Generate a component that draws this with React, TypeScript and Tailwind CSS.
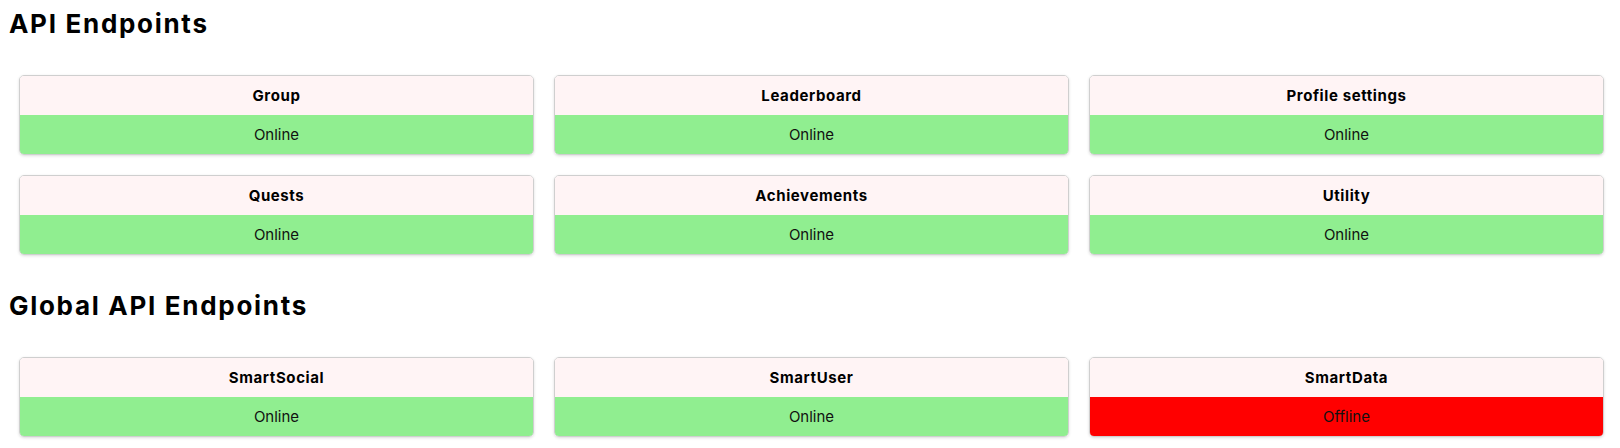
const apiEndpoints = [
  { name: "Group", online: true },
  { name: "Leaderboard", online: true },
  { name: "Profile settings", online: true },
  { name: "Quests", online: true },
  { name: "Achievements", online: true },
  { name: "Utility", online: true },
];

const globalEndpoints = [
  { name: "SmartSocial", online: true },
  { name: "SmartUser", online: true },
  { name: "SmartData", online: false },
];

function StatusCard({ name, online }: { name: string; online: boolean }) {
  return (
    <div className="overflow-hidden rounded-[5px] border border-[#cfcfcf] shadow-[0_1px_3px_rgba(0,0,0,0.14)]">
      <div className="flex h-[39px] items-center justify-center bg-[#fff4f5] pt-[2px] text-[15px] font-bold tracking-[0.6px] text-black">
        {name}
      </div>
      <div
        className={`flex h-[39px] items-center justify-center pt-[2px] text-[15px] text-[#111] ${
          online ? "bg-[#90ee90]" : "bg-[#ff0000]"
        }`}
      >
        {online ? "Online" : "Offline"}
      </div>
    </div>
  );
}

function Section({ title, items, className }: { title: string; items: { name: string; online: boolean }[]; className?: string }) {
  return (
    <section className={className}>
      <h1 className="pl-[9px] text-[26px] leading-[32px] font-bold tracking-[1.7px] text-black">{title}</h1>
      <div className="mt-[35px] grid grid-cols-3 gap-5 pl-[19px] pr-[16px]">
        {items.map((item) => (
          <StatusCard key={item.name} name={item.name} online={item.online} />
        ))}
      </div>
    </section>
  );
}

export default function App() {
  return (
    <div className="min-h-[448px] bg-white pt-2 font-['Inter','Noto_Sans',sans-serif]">
      <Section title="API Endpoints" items={apiEndpoints} />
      <Section title="Global API Endpoints" items={globalEndpoints} className="mt-[35px]" />
    </div>
  );
}
